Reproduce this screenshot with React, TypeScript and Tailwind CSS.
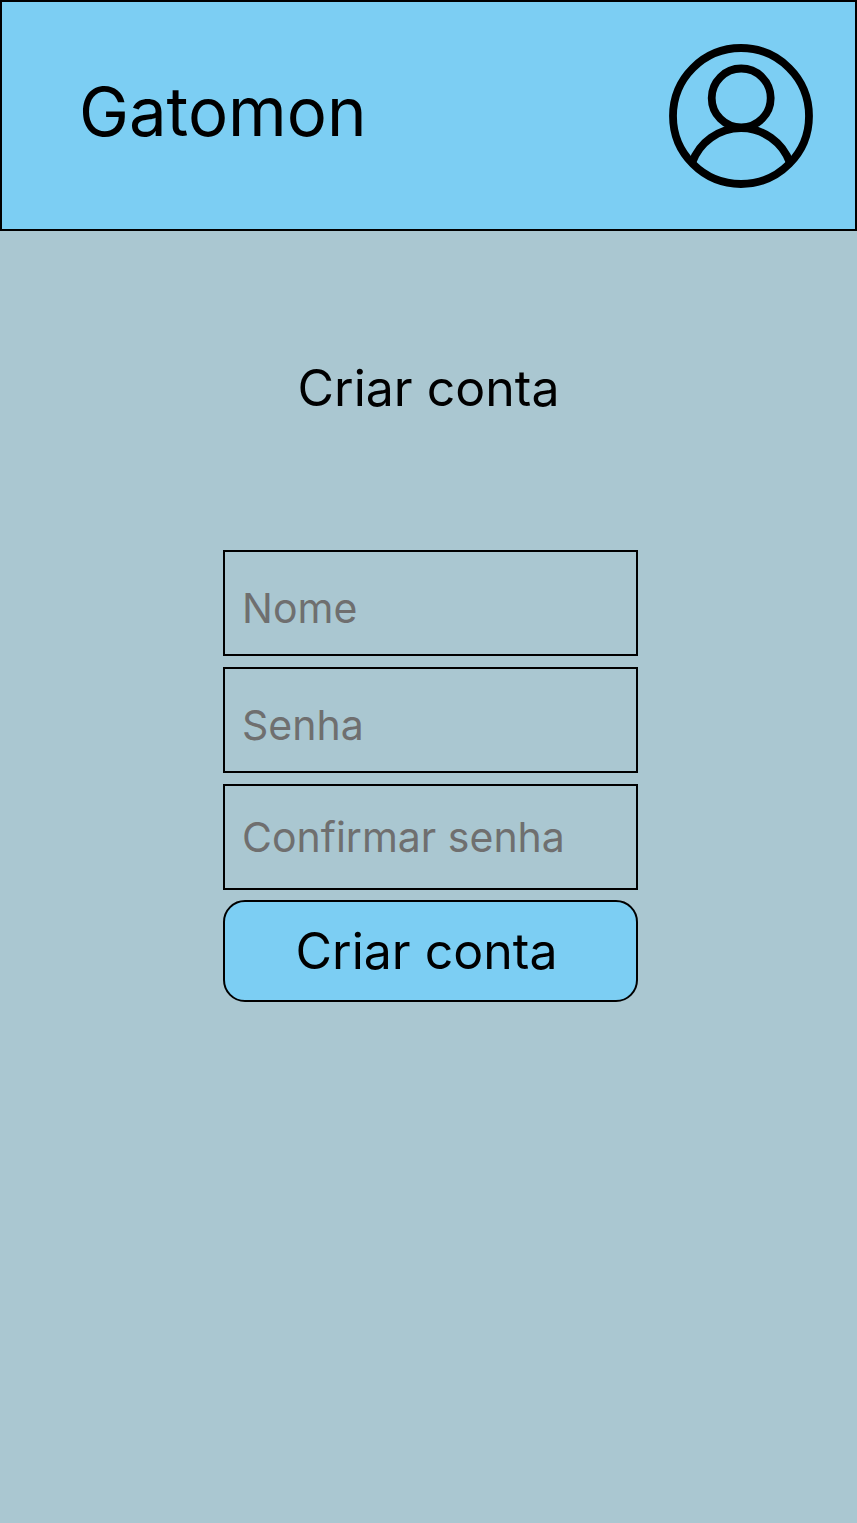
import React from "react";

const fields = [
  { id: "nome", label: "Nome", type: "text", pad: "pt-[10px]" },
  { id: "senha", label: "Senha", type: "password", pad: "pt-[10px]" },
  { id: "confirmar", label: "Confirmar senha", type: "password", pad: "pt-0" },
];

function UserIcon() {
  return (
    <svg viewBox="0 0 144 144" className="size-36" fill="none" stroke="black" strokeWidth="7.8" aria-hidden="true">
      <circle cx="72" cy="72" r="68" />
      <circle cx="72.2" cy="54" r="29.5" />
      <path d="M23 119A51.9 51.9 0 0 1 121 119" />
    </svg>
  );
}

export default function App() {
  return (
    <div className="min-h-screen bg-[#aac7d1] font-['Inter',sans-serif] text-black">
      <header className="flex items-center justify-between border-2 border-black bg-[#7ccef3] pt-[42px] pr-[42px] pb-[41px] pl-[77px]">
        <span className="pb-2 text-[67px] leading-[84px]">Gatomon</span>
        <button type="button" aria-label="Perfil">
          <UserIcon />
        </button>
      </header>
      <main className="flex flex-col items-center pt-[127px]">
        <h1 className="text-[50px] leading-[60px]">Criar conta</h1>
        <form className="mt-[132px] ml-1 flex w-[415px] flex-col gap-[10px]" onSubmit={(e) => e.preventDefault()}>
          <div className="flex flex-col gap-[11px]">
            {fields.map((f) => (
              <input
                key={f.id}
                id={f.id}
                type={f.type}
                aria-label={f.label}
                placeholder={f.label}
                className={`block h-[106px] w-full border-2 border-black bg-transparent px-[17px] text-[41px] placeholder:text-[#6f6f6f] ${f.pad}`}
              />
            ))}
          </div>
          <button type="submit" className="h-[102px] rounded-[22px] border-2 border-black bg-[#7ccef3] pr-2 text-[50px] leading-[60px]">
            Criar conta
          </button>
        </form>
      </main>
    </div>
  );
}
